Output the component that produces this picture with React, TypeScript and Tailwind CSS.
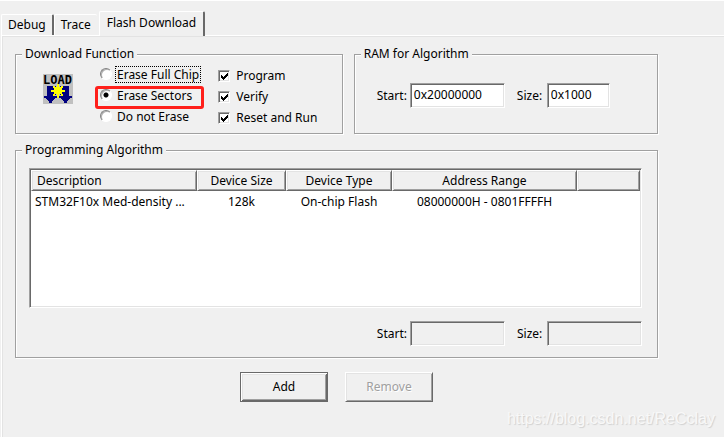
import { useState, type ReactNode } from "react";
import clsx from "clsx";

const tabs = ["Debug", "Trace", "Flash Download"];

const eraseModes = ["Erase Full Chip", "Erase Sectors", "Do not Erase"];

const options = ["Program", "Verify", "Reset and Run"];

const columns = ["Description", "Device Size", "Device Type", "Address Range"];

const algorithms = [
  {
    description: "STM32F10x Med-density ...",
    size: "128k",
    type: "On-chip Flash",
    range: "08000000H - 0801FFFFH",
  },
];

const sunken =
  "border border-t-[#a0a0a0] border-l-[#a0a0a0] border-r-white border-b-white shadow-[inset_1px_1px_0_#696969,inset_-1px_-1px_0_#e3e3e3]";

const raised =
  "border border-t-white border-l-white border-r-[#696969] border-b-[#696969] shadow-[inset_1px_1px_0_#e3e3e3,inset_-1px_-1px_0_#a0a0a0]";

function GroupBox({ title, className, children }: { title: string; className?: string; children: ReactNode }) {
  return (
    <fieldset
      className={clsx(
        "min-w-0 border border-[#a0a0a0] px-[6px] shadow-[1px_1px_0_#fff,inset_1px_1px_0_#fff]",
        className
      )}
    >
      <legend className="bg-[#f0f0f0] px-[3px]">{title}</legend>
      {children}
    </fieldset>
  );
}

function Field({ id, label, value, className, disabled }: { id: string; label: string; value?: string; className: string; disabled?: boolean }) {
  return (
    <div className="flex items-center gap-[3px]">
      <label htmlFor={id} className="min-w-[27px]">
        {label}
      </label>
      <input
        id={id}
        type="text"
        defaultValue={value}
        disabled={disabled}
        className={clsx("h-[25px] px-[3px] pb-[3px] outline-none", sunken, disabled ? "bg-[#f0f0f0]" : "bg-white", className)}
      />
    </div>
  );
}

function LoadIcon() {
  return (
    <svg width="30" height="30" viewBox="0 0 30 30" shapeRendering="crispEdges" aria-hidden="true">
      <rect width="30" height="30" fill="#c0c0c0" />
      <path
        fill="#000080"
        d="M4 12h9v9h-2v1h3v2h-2v1h-1v1h-1v1H9v2H6v-2H5v-1H4v-1H3v-1H1v-2h3zM17 12h9v10h3v2h-2v1h-1v1h-1v1h-1v2h-3v-2h-1v-1h-1v-1h-1v-1h-2v-2h3v-1h-2z"
      />
      <path
        fill="#ffff00"
        d="M14 10h2v3h2v-1h2v2h-1v2h3v2h-3v2h1v2h-2v-2h-2v4h-2v-4h-2v2h-2v-2h1v-2H8v-2h3v-2h-1v-2h2v1h2z"
      />
      <text x="0" y="10" fontSize="12" fontWeight="700" fontFamily="DejaVu Sans Mono, monospace">
        LOAD
      </text>
    </svg>
  );
}

export default function App() {
  const [tab, setTab] = useState("Flash Download");
  const [mode, setMode] = useState("Erase Sectors");

  return (
    <div className="relative flex min-h-screen flex-col border-t border-white bg-[#f0f0f0] pl-px font-['Noto_Sans','Open_Sans',sans-serif] text-[12px] leading-[16px] text-black">
      {/* Tabs */}
      <div role="tablist" className="flex items-end pt-[10px]">
        {tabs.map((name) => (
          <button
            key={name}
            role="tab"
            aria-selected={tab === name}
            onClick={() => setTab(name)}
            className={clsx(
              "rounded-t-[2px] border-t border-l border-white",
              tab === name
                ? "relative -mb-px ml-[2px] h-[25px] border-r-2 border-r-[#696969] bg-[#f0f0f0] px-[7px] pb-[3px]"
                : "h-[21px] px-[6px]",
              name === "Debug" && "border-r-2 border-r-[#696969]"
            )}
          >
            {name}
          </button>
        ))}
      </div>

      <div className="flex-1 border-t border-l border-white pt-[10px] pr-[66px] pl-[13px] shadow-[inset_1px_1px_0_#e3e3e3]">
        <div className="grid grid-cols-[14fr_13fr] gap-[11px]">
          <GroupBox title="Download Function">
            <div className="flex pt-[2px] pb-[5px]">
              <div className="pt-[10px] pl-[21px]">
                <LoadIcon />
              </div>
              <div className="ml-[27px]">
                {eraseModes.map((name) => (
                  <label key={name} className="relative flex h-[21px] items-center gap-[3px]">
                    <input
                      type="radio"
                      name="erase"
                      checked={mode === name}
                      onChange={() => setMode(name)}
                      className="mb-[2px] size-[12px] appearance-none rounded-full border border-t-[#808080] border-r-white border-b-white border-l-[#808080] bg-white shadow-[inset_1px_1px_0_#b0b0b0] checked:bg-[radial-gradient(circle,#000_2px,transparent_3px)]"
                    />
                    <span
                      className={clsx(
                        "border border-dotted px-px leading-[15px]",
                        name === "Erase Full Chip" ? "border-black" : "border-transparent"
                      )}
                    >
                      {name}
                    </span>
                    {name === "Erase Sectors" && (
                      <span className="pointer-events-none absolute top-px -right-[3px] -left-[5px] h-[23px] rounded-[3px] border-3 border-[#ff1f1a]" />
                    )}
                  </label>
                ))}
              </div>
              <div className="ml-[17px] pt-px">
                {options.map((name) => (
                  <label key={name} className="flex h-[21px] items-center gap-[6px]">
                    <span className="relative size-[12px]">
                      <input type="checkbox" defaultChecked className={clsx("peer block size-[12px] appearance-none bg-white", sunken)} />
                      <svg
                        viewBox="0 0 12 12"
                        className="pointer-events-none absolute inset-0 hidden size-[12px] peer-checked:block"
                        shapeRendering="crispEdges"
                      >
                        <path d="M3 5h1v1h1v1h1V6h1V5h1V4h1V3h1v3H9v1H8v1H7v1H6v1H5V9H4V8H3z" />
                      </svg>
                    </span>
                    {name}
                  </label>
                ))}
              </div>
            </div>
          </GroupBox>

          <GroupBox title="RAM for Algorithm">
            <div className="flex gap-[12px] pt-[21px] pl-[16px]">
              <Field id="ram-start" label="Start:" value="0x20000000" className="w-[95px]" />
              <Field id="ram-size" label="Size:" value="0x1000" className="w-[63px]" />
            </div>
          </GroupBox>
        </div>

        <GroupBox title="Programming Algorithm" className="mt-[8px]">
          <div className="pt-[10px] pr-[9px] pb-[11px] pl-[7px]">
            <div className={clsx("h-[140px] bg-white p-px", sunken)}>
              <table className="w-full table-fixed border-collapse">
                <colgroup>
                  <col className="w-[166px]" />
                  <col className="w-[89px]" />
                  <col className="w-[106px]" />
                  <col className="w-[185px]" />
                  <col />
                </colgroup>
                <thead>
                  <tr>
                    {columns.map((name) => (
                      <th key={name} className="p-0 font-normal first:text-left">
                        <div className={clsx("h-[21px] bg-[#f0f0f0] px-[5px] leading-[19px]", raised)}>{name}</div>
                      </th>
                    ))}
                    <td className="p-0">
                      <div className={clsx("h-[21px] bg-[#f0f0f0]", raised)} />
                    </td>
                  </tr>
                </thead>
                <tbody>
                  {algorithms.map((row) => (
                    <tr key={row.description} className="h-[21px] text-center">
                      <td className="truncate px-[4px] py-0 text-left">{row.description}</td>
                      <td className="p-0">{row.size}</td>
                      <td className="p-0">{row.type}</td>
                      <td className="p-0">{row.range}</td>
                      <td className="p-0" />
                    </tr>
                  ))}
                </tbody>
              </table>
            </div>
            <div className="mt-[13px] flex justify-end gap-[12px]">
              <Field id="alg-start" label="Start:" className="w-[95px]" disabled />
              <Field id="alg-size" label="Size:" className="w-[95px]" disabled />
            </div>
          </div>
        </GroupBox>

        <div className="mt-[14px] flex justify-center gap-[17px]">
          <button className="h-[30px] w-[88px] border border-[#696969] bg-[#f0f0f0] shadow-[inset_1px_1px_0_#fff,inset_-1px_-1px_0_#696969,inset_2px_2px_0_#e3e3e3,inset_-2px_-2px_0_#a0a0a0]">
            Add
          </button>
          <button disabled className={clsx("h-[30px] w-[88px] text-[#a0a0a0] text-shadow-[1px_1px_0_#fff]", raised)}>
            Remove
          </button>
        </div>
      </div>

      <p className="absolute right-[9px] bottom-[8px] font-['Liberation_Sans',sans-serif] text-[16px] leading-[20px] text-[#f8f8f8] text-shadow-[1px_1px_1px_#d0d0d0]">
        https://blog.csdn.net/ReCclay
      </p>
    </div>
  );
}
